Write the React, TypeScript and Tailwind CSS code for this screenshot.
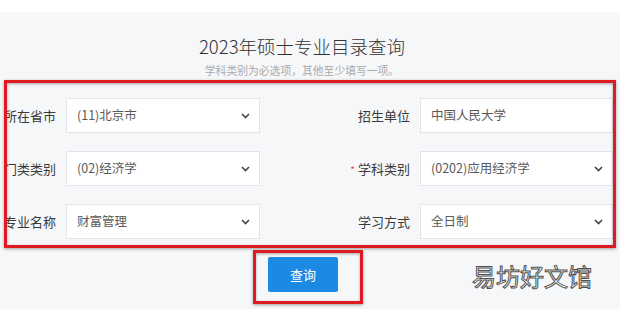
import React from 'react'

const font = { fontFamily: '"Microsoft YaHei", "Noto Sans CJK SC", "Noto Sans", sans-serif' }

function Chevron() {
  return (
    <svg width="9" height="6" viewBox="0 0 9 6" className="shrink-0">
      <path d="M1 1l3.5 3.5L8 1" fill="none" stroke="#444" strokeWidth="1.6" />
    </svg>
  )
}

function Field({ value, select = true, width }: { value: string; select?: boolean; width: string }) {
  return (
    <div
      className={`${width} h-[35px] bg-white border border-[#e3e5ea] flex items-center justify-between pl-[10px] pr-[9px] text-[12.5px] text-[#5a5a5a]`}
    >
      <span>{value}</span>
      {select && <Chevron />}
    </div>
  )
}

const rows = [
  { l: '所在省市', lv: '(11)北京市', r: '招生单位', rv: '中国人民大学', rSelect: false, req: false },
  { l: '门类类别', lv: '(02)经济学', r: '学科类别', rv: '(0202)应用经济学', rSelect: true, req: true },
  { l: '专业名称', lv: '财富管理', r: '学习方式', rv: '全日制', rSelect: true, req: false },
]

export default function App() {
  return (
    <div className="relative w-[620px] h-[309px] overflow-hidden bg-[#f6f7f9]" style={font}>
      <div className="h-3 bg-white" />
      <h1 className="mt-[22px] pr-[16px] text-center text-[18.5px] leading-[24px] font-light text-[#333]">
        2023年硕士专业目录查询
      </h1>
      <p className="mt-[5px] pr-[16px] text-center text-[10.8px] leading-[14px] text-[#aaa]">学科类别为必选项，其他至少填写一项。</p>

      <div className="mt-[21px] flex flex-col gap-[18px]">
        {rows.map((row) => (
          <div key={row.l} className="flex items-center">
            <div className="w-[56px] text-right text-[13px] text-[#3a3a3a] whitespace-nowrap">{row.l}</div>
            <div className="ml-[10px]">
              <Field value={row.lv} width="w-[194px]" />
            </div>
            <div className="ml-[80px] w-[70px] text-right text-[13px] text-[#3a3a3a] whitespace-nowrap">
              {row.req && <span className="mr-[3px] text-[10px] text-[#e34a4a]">*</span>}
              {row.r}
            </div>
            <div className="ml-[10px]">
              <Field value={row.rv} select={row.rSelect} width="w-[193px]" />
            </div>
          </div>
        ))}
      </div>

      <button className="mt-[18px] ml-[268px] w-[70px] h-[35px] rounded-[2px] bg-[#1c89e3] text-white text-[13px]">
        查询
      </button>

      <div className="absolute left-[472px] top-[261px] text-[24px] leading-[30px] text-white font-normal [-webkit-text-stroke:1px_#505050]">
        易坊好文馆
      </div>

      {/* annotation frames */}
      <div className="absolute left-[4px] top-[80px] w-[612px] h-[168px] border-[3px] border-[#e01a22] shadow-[0_1px_3px_rgba(0,0,0,0.35),inset_0_1px_3px_rgba(0,0,0,0.35)]" />
      <div className="absolute left-[253px] top-[250px] w-[110px] h-[54px] border-[3px] border-[#e01a22] shadow-[0_1px_3px_rgba(0,0,0,0.35),inset_0_1px_3px_rgba(0,0,0,0.35)]" />
    </div>
  )
}
